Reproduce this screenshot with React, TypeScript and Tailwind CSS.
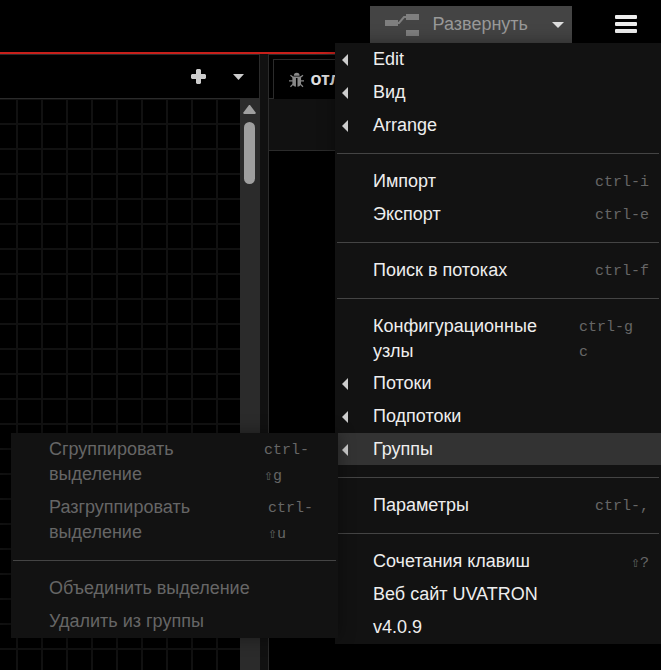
type Item = {
  label: string;
  keys?: string;
  keysWidth?: string;
  parent?: boolean;
  submenu?: Item[][];
};

const groupMenu: Item[][] = [
  [
    { label: "Сгруппировать\nвыделение", keys: "ctrl-\n⇧g", keysWidth: "w-[62px]" },
    { label: "Разгруппировать\nвыделение", keys: "ctrl-\n⇧u", keysWidth: "w-[58px]" },
  ],
  [{ label: "Объединить выделение" }, { label: "Удалить из группы" }],
];

const mainMenu: Item[][] = [
  [
    { label: "Edit", parent: true },
    { label: "Вид", parent: true },
    { label: "Arrange", parent: true },
  ],
  [
    { label: "Импорт", keys: "ctrl-i" },
    { label: "Экспорт", keys: "ctrl-e" },
  ],
  [{ label: "Поиск в потоках", keys: "ctrl-f" }],
  [{ label: "Конфигурационные\nузлы", keys: "ctrl-g\nc", keysWidth: "w-[70px]" }],
  [
    { label: "Потоки", parent: true },
    { label: "Подпотоки", parent: true },
    { label: "Группы", parent: true, submenu: groupMenu },
  ],
  [{ label: "Параметры", keys: "ctrl-," }],
  [
    { label: "Сочетания клавиш", keys: "⇧?" },
    { label: "Веб сайт UVATRON" },
    { label: "v4.0.9" },
  ],
];

function Keys({ text, width }: { text: string; width?: string }) {
  const [before, after] = text.split("⇧");
  return (
    <span
      className={`shrink-0 pt-px font-['Liberation_Mono',monospace] text-[15px] leading-[25px] text-[#666] ${width ?? ""}`}
    >
      {before}
      {after !== undefined && (
        <>
          <span className="font-['DejaVu_Sans_Mono',monospace]">⇧</span>
          {after}
        </>
      )}
    </span>
  );
}

function MenuItem({ item, disabled }: { item: Item; disabled?: boolean }) {
  return (
    <li className={item.submenu ? "relative bg-[#333]" : "relative"}>
      <button
        type="button"
        disabled={disabled}
        className={`flex h-full w-full items-start pt-1 pr-3 text-left text-[18px] leading-[25px] whitespace-pre-line ${
          disabled ? "text-[#666]" : "text-[#eee]"
        }`}
      >
        <span className="flex h-[25px] w-[38px] shrink-0 items-center pl-[7px]">
          {item.parent && (
            <svg width="6" height="12" viewBox="0 0 6 12" aria-hidden="true">
              <path d="M6 0v12L0 6z" fill="#ccc" />
            </svg>
          )}
        </span>
        <span className="flex-1 pb-[3px]">{item.label}</span>
        {item.keys && <Keys text={item.keys} width={item.keysWidth} />}
      </button>
      {item.submenu && (
        <div className="absolute top-0 right-[323px] w-[327px] bg-[#121212] pb-px shadow-[0_0_16px_rgba(0,0,0,0.4)]">
          <Menu groups={item.submenu} disabled />
        </div>
      )}
    </li>
  );
}

function Menu({ groups, disabled }: { groups: Item[][]; disabled?: boolean }) {
  return (
    <>
      {groups.map((group, i) => (
        <div key={group[0].label}>
          {i > 0 && !group[0].label.startsWith("Потоки") && (
            <hr className="mx-0.5 mt-3 mb-[11px] border-t border-[#444]" />
          )}
          <ul className="flex flex-col gap-px">
            {group.map((item) => (
              <MenuItem key={item.label} item={item} disabled={disabled} />
            ))}
          </ul>
        </div>
      ))}
    </>
  );
}

function Header() {
  return (
    <header className="relative z-10 flex h-[54px] items-start justify-end border-b-2 border-[#c7201b] bg-black pt-1.5 pr-6">
      <div className="flex h-[37px] bg-[#444]">
        <button type="button" className="flex items-center gap-3.5 pl-[15px] text-[18px] text-[#999]">
          <svg width="34" height="22" viewBox="0 0 34 22" aria-hidden="true">
            <path d="M0 6h13v6H0zM21 0h13v6H21zM21 16h13v6H21z" fill="#7f7f7f" />
            <path d="M12 9h2l5-6h3" fill="none" stroke="#7f7f7f" strokeWidth="2" />
          </svg>
          Развернуть
        </button>
        <button type="button" aria-label="Варианты развёртывания" className="flex w-11 items-center justify-end pr-2">
          <svg width="12" height="6" viewBox="0 0 12 6" aria-hidden="true">
            <path d="M0 0h12L6 6z" fill="#ddd" />
          </svg>
        </button>
      </div>
      <button type="button" aria-label="Меню" className="ml-[43px] flex h-9 items-center text-[#eee]">
        <svg width="22" height="18" viewBox="0 0 22 18" fill="currentColor" aria-hidden="true">
          <rect width="22" height="4" rx="1" />
          <rect y="7" width="22" height="4" rx="1" />
          <rect y="14" width="22" height="4" rx="1" />
        </svg>
      </button>
      <nav className="absolute top-[43px] right-0 w-[326px] bg-[#121212] pb-px shadow-[0_0_16px_rgba(0,0,0,0.4)]">
        <Menu groups={mainMenu} />
      </nav>
    </header>
  );
}

function Workspace() {
  return (
    <section className="flex min-w-0 flex-1 flex-col border-t border-r border-[#2b2b2b]">
      <div className="flex h-11 items-center justify-end border-b border-[#2b2b2b] pr-[15px] text-[#ccc]">
        <button type="button" aria-label="Добавить поток" className="mr-[27px]">
          <svg width="15" height="15" viewBox="0 0 15 15" fill="currentColor" aria-hidden="true">
            <path d="M6 0h3l1 1v4h4l1 1v3l-1 1h-4v4l-1 1H6l-1-1v-4H1L0 9V6l1-1h4V1z" />
          </svg>
        </button>
        <button type="button" aria-label="Список потоков">
          <svg width="11" height="6" viewBox="0 0 11 6" fill="currentColor" aria-hidden="true">
            <path d="M0 0h11L5.500 6z" />
          </svg>
        </button>
      </div>
      <div className="flex flex-1">
        <div className="flex-1 bg-[linear-gradient(to_right,#111_2px,transparent_2px),linear-gradient(to_bottom,#111_2px,transparent_2px)] bg-[size:25px_25px] bg-[position:16px_24px]" />
        <div className="flex w-[19px] flex-col items-center gap-2 bg-[#2b2b2b] pt-1.5">
          <svg width="13" height="9" viewBox="0 0 13 9" aria-hidden="true">
            <path d="M6 0h1l6 8-1 1H1L0 8z" fill="#9f9f9f" />
          </svg>
          <div className="h-[62px] w-[11px] rounded-full bg-[#9f9f9f]" />
        </div>
      </div>
    </section>
  );
}

function BugIcon() {
  return (
    <svg width="16" height="16" viewBox="0 0 16 16" fill="#888" aria-hidden="true">
      <path d="M5 3.500a3 3 0 0 1 6 0z" />
      <path d="M3.500 4.500h9V10a4.500 4.500 0 0 1-3.700 5V6H7.200v9a4.500 4.500 0 0 1-3.700-5z" />
      <path
        d="M1.500 3l3 2.500M14.500 3l-3 2.500M0 9h4M16 9h-4M1.500 15l3-3M14.500 15l-3-3"
        fill="none"
        stroke="#888"
        strokeWidth="1.300"
      />
    </svg>
  );
}

function Sidebar() {
  return (
    <aside className="flex w-[393px] shrink-0 flex-col border-t border-l border-[#2b2b2b]">
      <div className="flex h-11 items-end border-b border-[#2b2b2b] pl-1">
        <button
          type="button"
          className="-mb-px flex h-10 w-[68px] items-center gap-1.5 border-t border-l border-[#2b2b2b] bg-black pl-[15px] text-[18px] font-bold text-[#ddd]"
        >
          <BugIcon />
          отл
        </button>
      </div>
      <div className="h-[52px] border-b border-[#2b2b2b] bg-[#111]" />
      <div className="flex-1 bg-black" />
    </aside>
  );
}

export default function App() {
  return (
    <div className="flex min-h-screen flex-col overflow-hidden bg-black font-['Liberation_Sans',Arial,sans-serif]">
      <Header />
      <main className="flex flex-1">
        <Workspace />
        <div className="w-2 bg-[#111]" />
        <Sidebar />
      </main>
    </div>
  );
}
